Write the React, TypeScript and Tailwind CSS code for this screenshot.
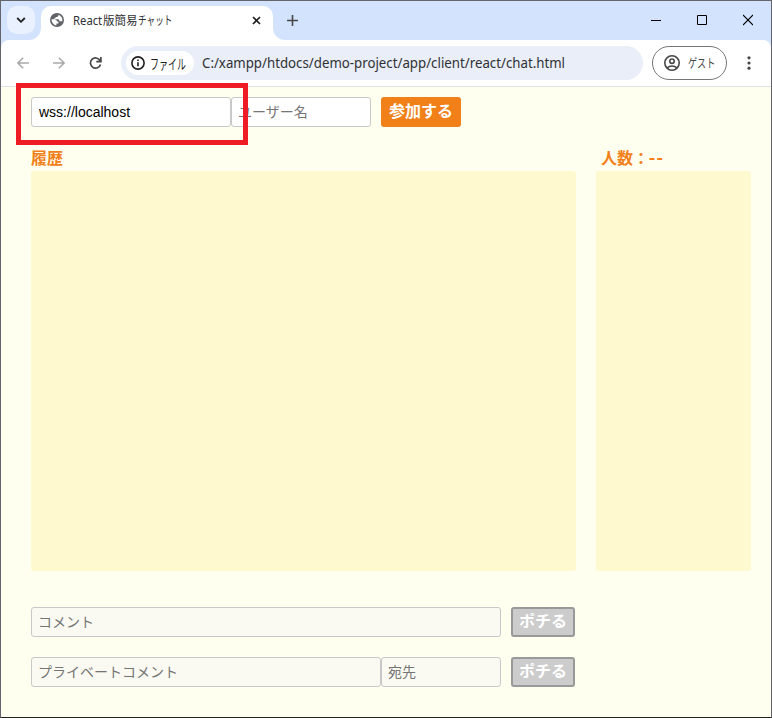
import React from "react";

const JP = "font-['Noto_Sans','Noto_Sans_CJK_JP',sans-serif]";
const CJK = "font-['Noto_Sans_CJK_JP',sans-serif]";
const field =
  "h-[30px] shrink-0 rounded-[3px] border border-[#c8c8c8] pl-[6px] pr-[7px] pb-[2px] text-[14px] outline-none placeholder:text-[#757575] placeholder:opacity-100 " +
  CJK;

function TitleBar() {
  return (
    <header className="flex h-[39px] shrink-0 bg-[#d3e3fd] pl-[6px]">
      <button className="mt-[5px] flex h-7 w-7 items-center justify-center rounded-[10px] bg-[#e9f1fe]">
        <svg width="10" height="8" viewBox="0 0 10 8" fill="none" stroke="#1f1f1f" strokeWidth="1.8">
          <path d="M1.2 2 5 5.8 8.8 2" />
        </svg>
      </button>
      <div className="relative ml-[6px] mt-[5px] flex h-[34px] w-[232px] items-center rounded-t-[10px] bg-white pb-[6px]">
        <svg className="absolute -left-3 bottom-0" width="12" height="12" viewBox="0 0 12 12">
          <path d="M12 0A12 12 0 0 1 0 12H12Z" fill="#fff" />
        </svg>
        <svg className="absolute -right-3 bottom-0" width="12" height="12" viewBox="0 0 12 12">
          <path d="M0 0A12 12 0 0 0 12 12H0Z" fill="#fff" />
        </svg>
        <svg className="ml-[9px]" width="14" height="14" viewBox="0 0 14 14">
          <circle cx="7" cy="7" r="7" fill="#5f6368" />
          <path d="M1.6 6.3H4.6Q7 6.4 7 8.6H8.4V10.6H6.4V12.4A5.5 5.5 0 0 1 1.6 6.3ZM8.4 1.7V2.8Q8.3 3.9 6.8 3.9H5.6V5.3H4.3V6.3H8.2Q9.4 6.4 9.5 8.2H12.3A5.5 5.5 0 0 0 8.4 1.7Z" fill="#fff" />
        </svg>
        <div className={"ml-[9px] flex h-5 w-[184px] items-center whitespace-nowrap pt-px text-[12px] leading-5 text-[#303134] " + JP}>
          <span className="w-[30px]"><span className="inline-block origin-left scale-x-[0.94]">React</span></span>
          <span className="w-[35px]"><span className="inline-block origin-left scale-x-[0.96]">版簡易</span></span>
          <span className="w-[34px]"><span className="inline-block origin-left scale-x-[0.72]">チャット</span></span>
        </div>
        <svg className="absolute left-[211px] top-[10px]" width="9" height="9" viewBox="0 0 9 9" stroke="#1f1f1f" strokeWidth="1.6">
          <path d="m1 1 7 7m0-7L1 8" />
        </svg>
      </div>
      <svg className="ml-[14px] mt-[14px]" width="11" height="11" viewBox="0 0 11 11" stroke="#474747" strokeWidth="1.6">
        <path d="M5.5 0v11M0 5.5h11" />
      </svg>
      <div className="ml-auto mr-[18px] mt-[13px] flex gap-9">
        <svg width="10" height="12" viewBox="0 0 10 12" stroke="#000"><path d="M0 6.5h10" /></svg>
        <svg width="10" height="12" viewBox="0 0 10 12" fill="none" stroke="#000"><path d="M.5 1.5h9v9h-9z" /></svg>
        <svg width="10" height="12" viewBox="0 0 10 12" stroke="#000" strokeWidth="1.1"><path d="m0 1 10 10M10 1 0 11" /></svg>
      </div>
    </header>
  );
}

function Toolbar() {
  return (
    <div className="h-[47px] shrink-0 bg-[#d3e3fd]">
      <nav className="flex h-full items-center rounded-t-lg border-b border-[#dfe1e5] bg-white pl-4">
        <svg width="12" height="12" viewBox="0 0 12 12" fill="none" stroke="#a9a9a9" strokeWidth="1.5">
          <path d="M12 6H1m5.2-5.3L.9 6l5.3 5.3" />
        </svg>
        <svg className="ml-6" width="12" height="12" viewBox="0 0 12 12" fill="none" stroke="#a9a9a9" strokeWidth="1.5">
          <path d="M0 6h11M5.8.7 11.1 6l-5.3 5.3" />
        </svg>
        <svg className="ml-6" width="13" height="12" viewBox="0 0 13 12" fill="none" stroke="#474747" strokeWidth="1.7">
          <path d="M11 3.5A5.1 5.1 0 1 0 11.5 7.4M11.9 0v4.6H7.3" />
        </svg>
        <div className="ml-[19px] flex h-[34px] w-[522px] shrink-0 items-center rounded-full bg-[#e9eef8] pl-[5px]">
          <div className="flex h-6 w-[68px] shrink-0 items-center rounded-full bg-white pl-[5px]">
            <svg width="14" height="14" viewBox="0 0 14 14" fill="none" stroke="#1f1f1f" strokeWidth="1.6">
              <circle cx="7" cy="7" r="6.1" />
              <path d="M7 6.2v4M7 3.5v1.5" />
            </svg>
            <span className={"ml-[5px] w-9 whitespace-nowrap pb-px text-[14px] leading-5 text-[#1f1f1f] " + CJK}>
              <span className="inline-block origin-left scale-x-[0.64]">ファイル</span>
            </span>
          </div>
          <span className="ml-2 whitespace-nowrap font-['Noto_Sans',sans-serif] text-[14px] leading-5 text-[#303134]">
            <span className="inline-block origin-left scale-x-[0.947]">C:/xampp/htdocs/demo-project/app/client/react/chat.html</span>
          </span>
        </div>
        <button className="ml-[9px] flex h-[34px] w-[75px] shrink-0 items-center rounded-full border border-[#747775] pl-[11px]">
          <svg width="16" height="16" viewBox="0 0 16 16" fill="none" stroke="#474747" strokeWidth="1.6">
            <circle cx="8" cy="8" r="7.2" />
            <circle cx="8" cy="6.2" r="2.2" />
            <path d="M3 13c2.6-2.6 7.4-2.6 10 0" />
          </svg>
          <span className={"ml-2 w-[27px] whitespace-nowrap text-left text-[12px] leading-5 text-[#474747] " + CJK}>
            <span className="inline-block origin-left scale-x-[0.76]">ゲスト</span>
          </span>
        </button>
        <svg className="ml-[20px]" width="4" height="14" viewBox="0 0 4 14" fill="#474747">
          <circle cx="2" cy="1.8" r="1.6" /><circle cx="2" cy="7" r="1.6" /><circle cx="2" cy="12.2" r="1.6" />
        </svg>
      </nav>
    </div>
  );
}

function SendButton() {
  return (
    <button disabled className={"ml-[10px] flex h-[30px] w-16 items-center justify-center rounded-[3px] border-2 border-[#999] bg-[#ccc] pb-1 text-[16px] font-bold leading-none text-white " + CJK}>
      ポチる
    </button>
  );
}

export default function App() {
  return (
    <div className="flex h-[718px] w-[772px] flex-col overflow-hidden border border-[#64656b] border-b-[#252525] bg-[#fffff0]">
      <TitleBar />
      <Toolbar />
      <main className="relative flex-1 pl-[30px] pt-[10px]">
        <div className="flex">
          <input defaultValue="wss://localhost" className="h-[30px] w-[200px] rounded-[3px] border border-[#c8c8c8] bg-white px-[7px] font-['Liberation_Sans',Arial,sans-serif] text-[14px] text-black outline-none" />
          <input placeholder="ユーザー名" className={field + " w-[140px] bg-white"} />
          <button className={"ml-[10px] flex h-[30px] w-20 items-center justify-center rounded-[3px] bg-[#f28019] pb-1 text-[16px] font-bold leading-none text-white " + CJK}>
            参加する
          </button>
        </div>
        <div className={"mt-5 flex text-[16px] font-bold text-[#f28019] " + CJK}>
          <section className="w-[545px]">
            <h2 className="h-6 leading-[20px]">履歴</h2>
            <div className="h-[400px] rounded-[3px] bg-[#fff9d0]" />
          </section>
          <section className="ml-5 w-[155px]">
            <h2 className="flex h-6 pl-[5px] leading-[20px]">
              <span>人数</span>
              <span className="w-4 text-center">：</span>
              <span className="inline-block origin-left scale-x-[1.16] font-['Noto_Sans',sans-serif] tracking-[1.5px]">--</span>
            </h2>
            <div className="h-[400px] rounded-[3px] bg-[#fff9d0]" />
          </section>
        </div>
        <div className="mt-9 flex">
          <input disabled placeholder="コメント" className={field + " w-[470px] bg-[#fafaf2]"} />
          <SendButton />
        </div>
        <div className="mt-5 flex">
          <input disabled placeholder="プライベートコメント" className={field + " w-[350px] bg-[#fafaf2]"} />
          <input disabled placeholder="宛先" className={field + " w-[120px] bg-[#fafaf2]"} />
          <SendButton />
        </div>
        <div className="pointer-events-none absolute -top-1 left-[15px] h-[62px] w-[232px] border-[5px] border-[#ee1c25]" />
      </main>
    </div>
  );
}
